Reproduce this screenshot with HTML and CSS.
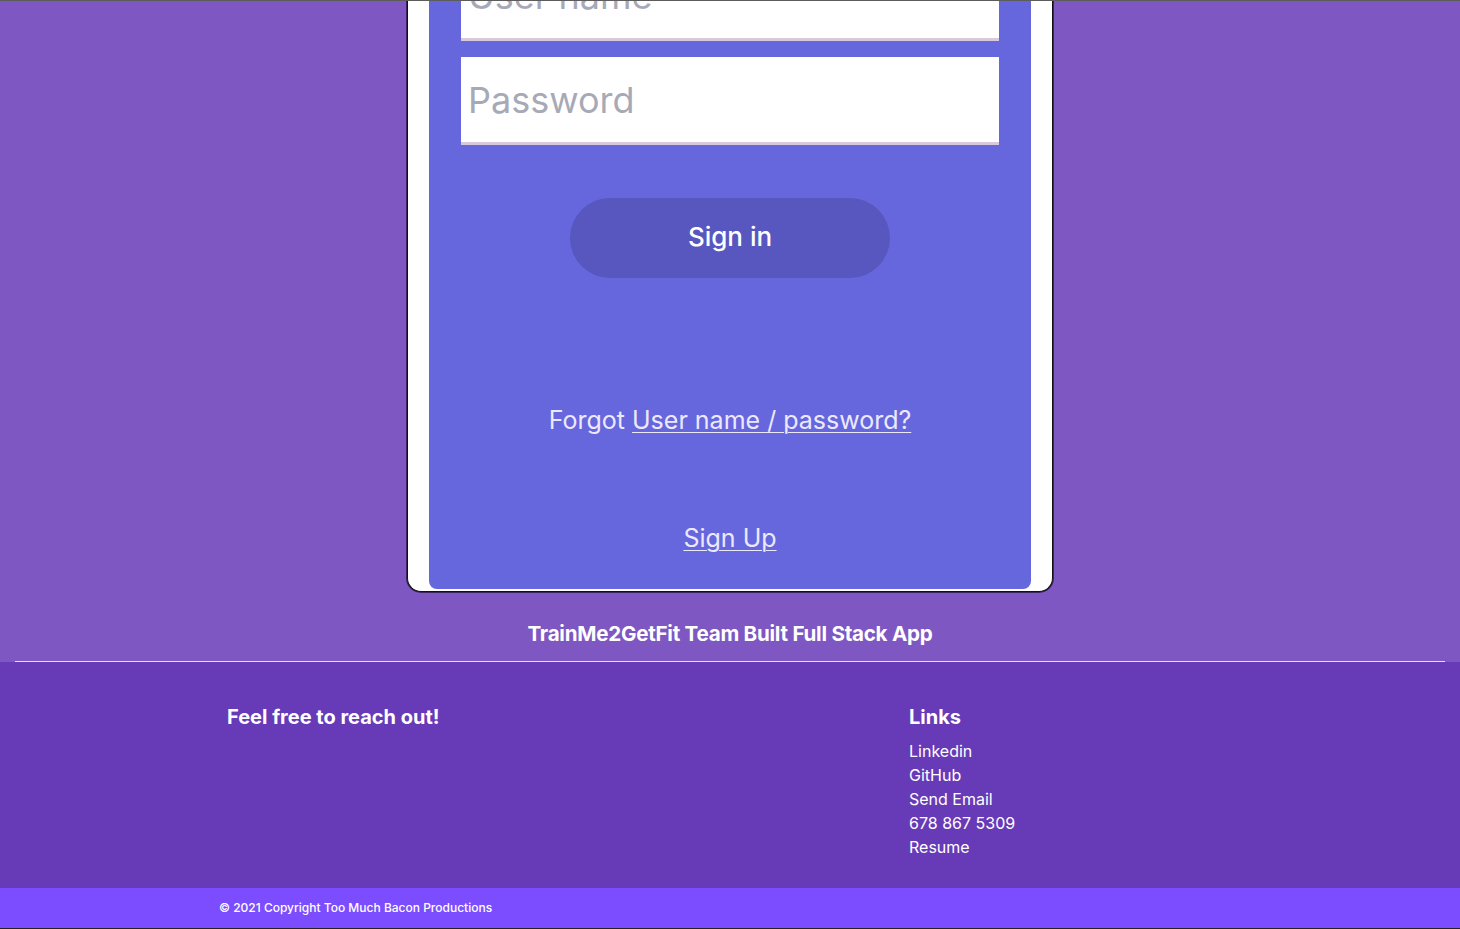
FILE: index.html
```html
<!DOCTYPE html>
<html lang="en">
<head>
<meta charset="utf-8">
<title>TrainMe2GetFit - Sign in</title>
<link rel="stylesheet" href="styles.css">
</head>
<body>
<div class="page">
  <main class="login-wrap">
    <div class="card">
      <form class="panel">
        <input class="field" type="text" placeholder="User name">
        <input class="field" type="password" placeholder="Password">
        <button class="btn" type="button">Sign in</button>
        <p class="forgot">Forgot <a href="#">User name / password?</a></p>
        <p class="signup"><a href="#">Sign Up</a></p>
      </form>
    </div>
    <h2 class="tagline">TrainMe2GetFit Team Built Full Stack App</h2>
  </main>
  <hr class="divider">
  <footer class="footer">
    <div class="footer-inner">
      <div class="footer-col">
        <h3 class="footer-title">Feel free to reach out!</h3>
      </div>
      <div class="footer-col">
        <h3 class="footer-title">Links</h3>
        <ul class="links">
          <li><a href="#">Linkedin</a></li>
          <li><a href="#">GitHub</a></li>
          <li><a href="#">Send Email</a></li>
          <li><a href="#">678 867 5309</a></li>
          <li><a href="#">Resume</a></li>
        </ul>
      </div>
    </div>
    <div class="copyright">
      <div class="copyright-inner">© 2021 Copyright Too Much Bacon Productions</div>
    </div>
  </footer>
</div>
</body>
</html>
```

FILE: styles.css
```css
* { box-sizing: border-box; }
html, body { margin: 0; padding: 0; }
body {
  background: #7E57C2;
  font-family: Inter, "Open Sans", "Liberation Sans", sans-serif;
  color: #fff;
  border-top: 1px solid #5c5c5c;
  overflow: hidden;
}
.page { display: flex; flex-direction: column; }

.login-wrap {
  display: flex;
  flex-direction: column;
  align-items: center;
  margin-top: -64px;
}
.card {
  width: 646px;
  background: #fff;
  border: 1px solid #111;
  border-top: none;
  box-shadow: 0 0 0 1px #3a2660;
  border-radius: 0 0 14px 14px;
  padding: 0 21px 2px;
}
.panel {
  background: #6666DD;
  border-radius: 0 0 8px 8px;
  padding: 16px 32px 35px;
  display: flex;
  flex-direction: column;
  align-items: center;
}
.field {
  width: 538px;
  height: 88px;
  border: none;
  border-bottom: 3px solid #d9c9dc;
  background: #fff;
  padding: 0 7px;
  font-family: inherit;
  font-size: 36px;
  color: #333;
  outline: none;
}
.field + .field { margin-top: 16px; }
.field::placeholder { color: #a7aab6; }
.btn {
  margin-top: 53px;
  width: 320px;
  height: 80px;
  border: none;
  border-radius: 40px;
  background: #5757BF;
  color: #fff;
  font-family: inherit;
  font-size: 26px;
  font-weight: 500;
  padding-bottom: 4px;
}
.forgot {
  margin: 126px 0 0;
  font-size: 25px;
  line-height: 32px;
  color: #ece9ff;
}
.forgot a, .signup a { color: #ece9ff; text-decoration: underline; text-underline-offset: 3px; text-decoration-thickness: 1px; }
.signup {
  margin: 86px 0 0;
  font-size: 25px;
  line-height: 32px;
}
.tagline {
  margin: 30px 0 15px;
  font-size: 20.6px;
  line-height: 24px;
  font-weight: 700;
  letter-spacing: -0.25px;
}
.divider {
  margin: 0 15px;
  border: none;
  border-top: 1px solid #e6def2;
  height: 0;
}
.footer { background: #673AB7; }
.footer-inner {
  display: flex;
  padding: 43px 0 29px 227px;
}
.footer-col:first-child { width: 682px; }
.footer-title {
  margin: 0 0 10px;
  font-size: 20px;
  line-height: 24px;
  font-weight: 700;
  letter-spacing: 0;
}
.links { list-style: none; margin: 0; padding: 0; }
.links li { font-size: 16px; line-height: 24px; }
.links a { color: #fff; text-decoration: none; }
.copyright { background: #7C4DFF; border-bottom: 1px solid #222; }
.copyright-inner {
  padding: 0 0 0 219px;
  height: 40px;
  line-height: 39px;
  font-size: 12px;
  font-weight: 500;
}
```
